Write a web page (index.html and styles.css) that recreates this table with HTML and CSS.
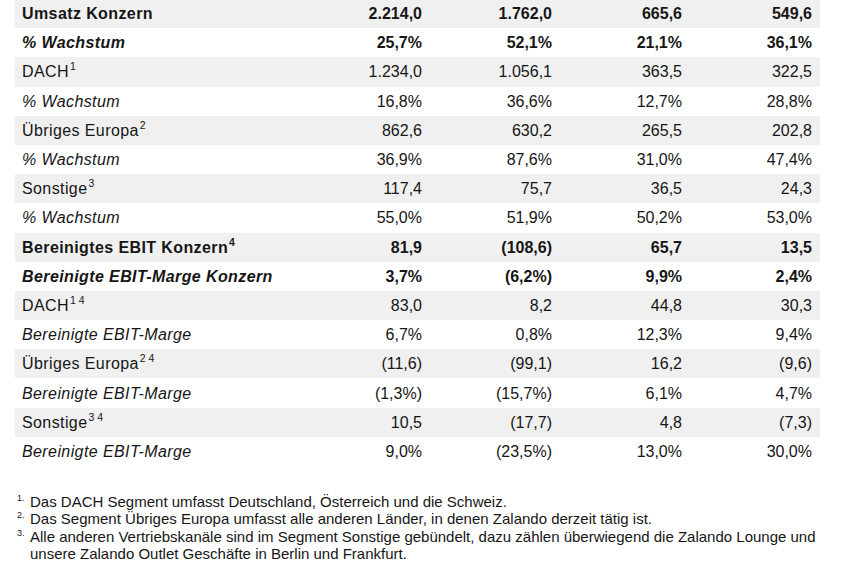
FILE: index.html
```html
<!DOCTYPE html>
<html lang="de">
<head>
<meta charset="utf-8">
<title>Segmente</title>
<link rel="stylesheet" href="styles.css">
</head>
<body>
<table class="fin">
  <colgroup>
    <col class="c-label"><col class="c-num"><col class="c-num"><col class="c-num"><col class="c-num">
  </colgroup>
  <tbody>
    <tr class="shade bold"><td>Umsatz Konzern</td><td>2.214,0</td><td>1.762,0</td><td>665,6</td><td>549,6</td></tr>
    <tr class="bold"><td class="it">% Wachstum</td><td>25,7%</td><td>52,1%</td><td>21,1%</td><td>36,1%</td></tr>
    <tr class="shade"><td>DACH<sup>1</sup></td><td>1.234,0</td><td>1.056,1</td><td>363,5</td><td>322,5</td></tr>
    <tr><td class="it">% Wachstum</td><td>16,8%</td><td>36,6%</td><td>12,7%</td><td>28,8%</td></tr>
    <tr class="shade"><td>Übriges Europa<sup>2</sup></td><td>862,6</td><td>630,2</td><td>265,5</td><td>202,8</td></tr>
    <tr><td class="it">% Wachstum</td><td>36,9%</td><td>87,6%</td><td>31,0%</td><td>47,4%</td></tr>
    <tr class="shade"><td>Sonstige<sup>3</sup></td><td>117,4</td><td>75,7</td><td>36,5</td><td>24,3</td></tr>
    <tr><td class="it">% Wachstum</td><td>55,0%</td><td>51,9%</td><td>50,2%</td><td>53,0%</td></tr>
    <tr class="shade bold"><td>Bereinigtes EBIT Konzern<sup>4</sup></td><td>81,9</td><td>(108,6)</td><td>65,7</td><td>13,5</td></tr>
    <tr class="bold"><td class="it">Bereinigte EBIT-Marge Konzern</td><td>3,7%</td><td>(6,2%)</td><td>9,9%</td><td>2,4%</td></tr>
    <tr class="shade"><td>DACH<sup>1 4</sup></td><td>83,0</td><td>8,2</td><td>44,8</td><td>30,3</td></tr>
    <tr><td class="it">Bereinigte EBIT-Marge</td><td>6,7%</td><td>0,8%</td><td>12,3%</td><td>9,4%</td></tr>
    <tr class="shade"><td>Übriges Europa<sup>2 4</sup></td><td>(11,6)</td><td>(99,1)</td><td>16,2</td><td>(9,6)</td></tr>
    <tr><td class="it">Bereinigte EBIT-Marge</td><td>(1,3%)</td><td>(15,7%)</td><td>6,1%</td><td>4,7%</td></tr>
    <tr class="shade"><td>Sonstige<sup>3 4</sup></td><td>10,5</td><td>(17,7)</td><td>4,8</td><td>(7,3)</td></tr>
    <tr><td class="it">Bereinigte EBIT-Marge</td><td>9,0%</td><td>(23,5%)</td><td>13,0%</td><td>30,0%</td></tr>
  </tbody>
</table>

<ol class="notes">
  <li><span class="mark">1.</span><span>Das DACH Segment umfasst Deutschland, Österreich und die Schweiz.</span></li>
  <li><span class="mark">2.</span><span>Das Segment Übriges Europa umfasst alle anderen Länder, in denen Zalando derzeit tätig ist.</span></li>
  <li><span class="mark">3.</span><span>Alle anderen Vertriebskanäle sind im Segment Sonstige gebündelt, dazu zählen überwiegend die Zalando Lounge und unsere Zalando Outlet Geschäfte in Berlin und Frankfurt.</span></li>
  <li><span class="mark">4.</span><span></span></li>
</ol>
</body>
</html>
```

FILE: styles.css
```css
html, body {
  margin: 0;
  padding: 0;
  background: #ffffff;
}

body {
  font-family: "Liberation Sans", Arial, sans-serif;
  color: #161616;
  font-size: 15px;
}

.fin {
  border-collapse: collapse;
  table-layout: fixed;
  width: 805px;
  margin: -1px 0 0 15px;
  font-size: 16px;
}

.c-label { width: 285px; }
.c-num { width: 130px; }

.fin td {
  height: 29.2px;
  padding: 1px 8px 0 0;
  text-align: right;
  vertical-align: middle;
  line-height: 18px;
  white-space: nowrap;
  box-sizing: border-box;
}

.fin td:first-child {
  text-align: left;
  padding: 1px 0 0 7px;
  letter-spacing: 0.4px;
}

.fin tr.shade td {
  background: #f0f0f0;
}

.fin tr.bold td {
  font-weight: bold;
}

.fin td.it {
  font-style: italic;
}

.fin sup {
  font-size: 10.5px;
  line-height: 0;
  vertical-align: 7px;
  margin-left: 1px;
  letter-spacing: 0;
}

.notes {
  list-style: none;
  margin: 27px 0 0 0;
  padding: 0 25px 0 17px;
  font-size: 15px;
  line-height: 17.3px;
}

.notes li {
  display: grid;
  grid-template-columns: 13px 1fr;
}

.notes .mark {
  font-size: 9px;
  line-height: 9px;
  padding-top: 1px;
}
```
